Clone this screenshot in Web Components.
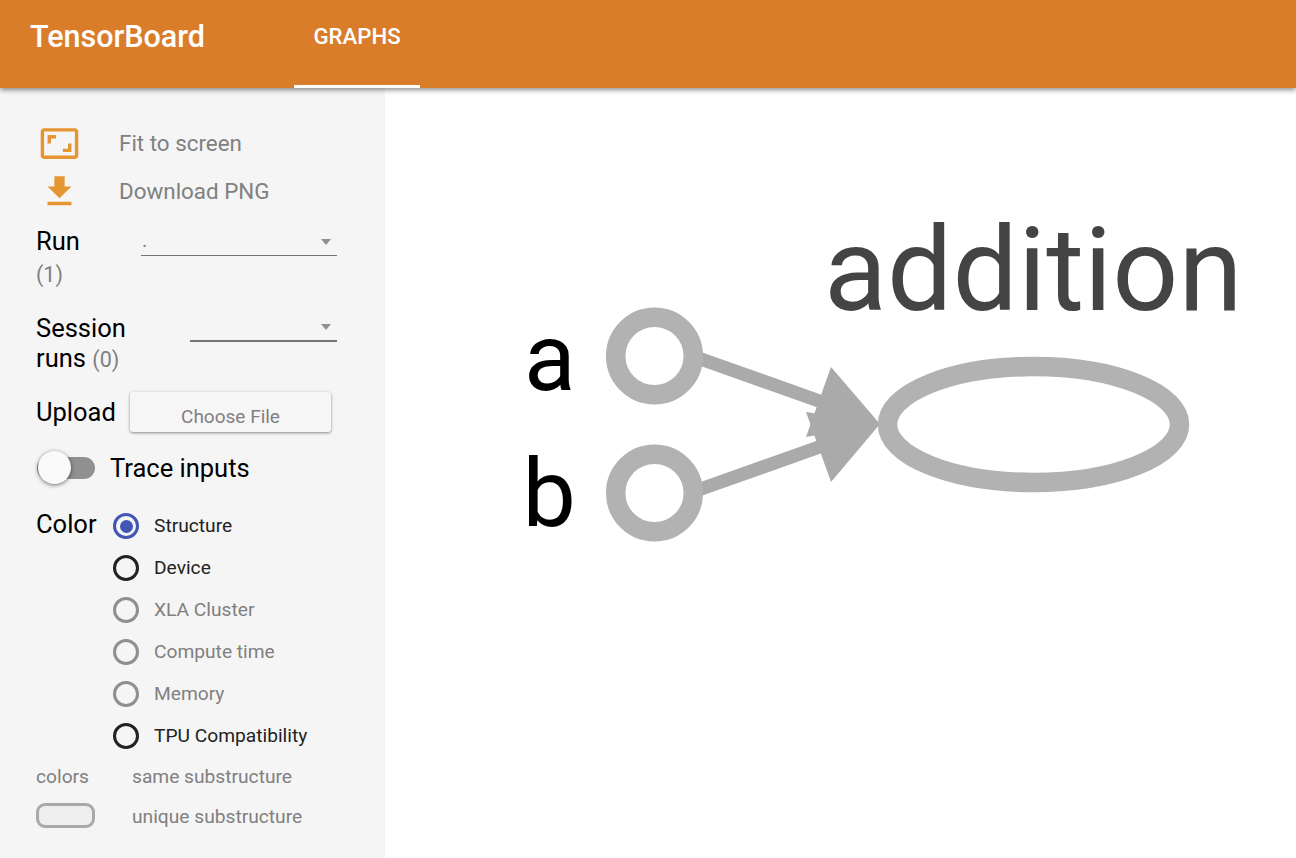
<!DOCTYPE html>
<html>
<head>
<meta charset="utf-8">
<title>TensorBoard</title>
<style>
html, body { margin: 0; height: 100%; overflow: hidden; background: #fff; }
body { font-family: Roboto, sans-serif; }
tb-app { height: 858px; }
</style>
</head>
<body>
<tb-app></tb-app>

<script>
class TbHeader extends HTMLElement {
  constructor() {
    super();
    this.attachShadow({ mode: "open" });
    this.shadowRoot.innerHTML = `
<style>
:host {
  display: flex;
  height: 88px;
  flex: none;
  background: #d97d2b;
  color: #fff;
  box-shadow: 0 2px 5px rgba(0,0,0,.45);
  position: relative;
  z-index: 2;
}
.title { font-size: 30.5px; font-weight: 500; margin: 17px 0 0 30px; width: 264px; line-height: 40px; }
.tab {
  width: 126px;
  box-sizing: border-box;
  height: 88px;
  border-bottom: 3px solid #fff;
  text-align: center;
  font-size: 22.2px;
  font-weight: 500;
  line-height: 24px;
  padding-top: 24px;
}
</style>
<div class="title">TensorBoard</div>
<div class="tab">GRAPHS</div>`;
  }
}

class TbAction extends HTMLElement {
  constructor() {
    super();
    this.attachShadow({ mode: "open" });
    this.shadowRoot.innerHTML = `
<style>
:host { display: flex; align-items: center; height: 48px; color: #808080; font-size: 22.4px; }
svg { width: 41px; height: 41px; fill: #e59632; margin: 0 39px 0 3px; flex: none; }
</style>
<svg viewBox="0 0 24 24"><path d="${this.getAttribute("icon")}"/></svg>
<slot></slot>`;
  }
}

class TbDropdown extends HTMLElement {
  constructor() {
    super();
    this.attachShadow({ mode: "open" });
    this.shadowRoot.innerHTML = `
<style>
:host {
  display: block;
  box-sizing: border-box;
  position: relative;
  height: 31px;
  border-bottom: 1px solid #757575;
  color: #808080;
  font-size: 20px;
  line-height: 30px;
  padding-left: 1px;
}
.caret {
  position: absolute;
  right: 6px;
  bottom: 10px;
  border: 5px solid transparent;
  border-top: 6px solid #909090;
  border-bottom: 0;
}
</style>
<slot></slot><div class="caret"></div>`;
  }
}

class TbToggle extends HTMLElement {
  constructor() {
    super();
    this.attachShadow({ mode: "open" });
    this.shadowRoot.innerHTML = `
<style>
:host { display: flex; align-items: center; height: 32px; font-size: 25.5px; color: #000; }
.track { width: 58px; height: 22px; border-radius: 11px; background: #919191; margin: 0 15px 0 1px; position: relative; flex: none; }
.knob {
  position: absolute;
  left: 1px;
  top: -6px;
  width: 33px;
  height: 33px;
  border-radius: 50%;
  background: #fafafa;
  box-shadow: 0 1px 4px rgba(0,0,0,.55);
}
</style>
<div class="track"><div class="knob"></div></div>
<slot></slot>`;
  }
}

class TbRadio extends HTMLElement {
  constructor() {
    super();
    this.attachShadow({ mode: "open" });
    this.shadowRoot.innerHTML = `
<style>
:host { display: flex; align-items: center; height: 42px; font-size: 19.2px; line-height: 40px; color: var(--radio-color, #808080); }
.ring {
  box-sizing: border-box;
  width: 26px;
  height: 26px;
  border-radius: 50%;
  border: 3px solid var(--ring-color, #8f8f8f);
  margin-right: 15px;
  flex: none;
  display: flex;
  align-items: center;
  justify-content: center;
}
.dot { width: 13px; height: 13px; border-radius: 50%; background: var(--dot-color, transparent); }
</style>
<div class="ring"><div class="dot"></div></div>
<slot></slot>`;
  }
}

class TbSidebar extends HTMLElement {
  constructor() {
    super();
    this.attachShadow({ mode: "open" });
    this.shadowRoot.innerHTML = `
<style>
:host {
  display: block;
  box-sizing: border-box;
  width: 385px;
  flex: none;
  background: #f5f5f5;
  padding: 31px 48px 0 36px;
  color: #000;
  font-size: 25.5px;
}
.muted { color: #808080; font-size: 21.5px; }
.run { display: grid; grid-template-columns: 105px 1fr; height: 82px; margin-top: 10px; line-height: 32px; }
.session { display: grid; grid-template-columns: 154px 1fr; height: 75px; margin-top: 2px; line-height: 30px; }
.session > div { padding-top: 4px; }
.session tb-dropdown { border-bottom-width: 2px; height: 33px; }
.upload { display: flex; align-items: center; height: 40px; margin-top: 8px; }
.upload span { width: 94px; }
.file {
  width: 201px;
  height: 40px;
  box-sizing: border-box;
  border-radius: 3px;
  background: #f6f6f6;
  box-shadow: 0 1px 3px rgba(0,0,0,.45);
  color: #808080;
  font-size: 19px;
  text-align: center;
  line-height: 50px;
}
tb-toggle { margin-top: 20px; }
.color { display: grid; grid-template-columns: 77px 1fr; margin-top: 21px; line-height: 39px; }
.legend { display: grid; grid-template-columns: 96px 1fr; grid-auto-rows: 40px; align-items: center; color: #808080; font-size: 19.2px; margin-top: -1px; }
.swatch { box-sizing: border-box; width: 59px; height: 25px; border: 3px solid #a9a9a9; border-radius: 9px; background: #eee; margin-bottom: 1px; }
.on { --ring-color: #4355b5; --dot-color: #4355b5; --radio-color: #222; }
.dark { --ring-color: #222; --radio-color: #222; }
</style>
<tb-action icon="M19 12h-2v3h-3v2h5v-5zM7 9h3V7H5v5h2V9zm14-6H3c-1.1 0-2 .9-2 2v14c0 1.1.9 2 2 2h18c1.1 0 2-.9 2-2V5c0-1.1-.9-2-2-2zm0 16.01H3V4.99h18v14.02z">Fit to screen</tb-action>
<tb-action icon="M19 9h-4V3H9v6H5l7 7 7-7zM5 18v2h14v-2H5z">Download PNG</tb-action>
<div class="run"><div>Run<br><span class="muted">(1)</span></div><tb-dropdown>.</tb-dropdown></div>
<div class="session"><div>Session<br>runs <span class="muted">(0)</span></div><tb-dropdown></tb-dropdown></div>
<div class="upload"><span>Upload</span><div class="file">Choose File</div></div>
<tb-toggle>Trace inputs</tb-toggle>
<div class="color">
  <div>Color</div>
  <div>
    <tb-radio class="on">Structure</tb-radio>
    <tb-radio class="dark">Device</tb-radio>
    <tb-radio>XLA Cluster</tb-radio>
    <tb-radio>Compute time</tb-radio>
    <tb-radio>Memory</tb-radio>
    <tb-radio class="dark">TPU Compatibility</tb-radio>
  </div>
</div>
<div class="legend">
  <div>colors</div><div>same substructure</div>
  <div class="swatch"></div><div>unique substructure</div>
</div>`;
  }
}

// the graph is a free canvas, coordinates are page coordinates via viewBox
class TbGraph extends HTMLElement {
  constructor() {
    super();
    this.attachShadow({ mode: "open" });
    this.shadowRoot.innerHTML = `
<style>
:host { display: block; flex: 1; min-width: 0; background: #fff; }
svg { display: block; width: 100%; height: 100%; font-family: Roboto, sans-serif; }
.node { fill: #fff; stroke: #b2b2b2; stroke-width: 19.5; }
.edge { stroke: #aaa; stroke-width: 13.5; }
.head { fill: #aaa; }
</style>
<svg viewBox="385 88 911 770">
  <line class="edge" x1="698" y1="358" x2="822" y2="402"/>
  <line class="edge" x1="698" y1="490" x2="822" y2="446"/>
  <polygon class="head" points="831,367 880,424 806,437"/>
  <polygon class="head" points="831,482 880,424 806,412"/>
  <circle class="node" cx="654.5" cy="356" r="38.8"/>
  <circle class="node" cx="654.5" cy="493" r="38.8"/>
  <ellipse class="node" cx="1033.5" cy="424.5" rx="146" ry="58"/>
  <text x="524" y="390" font-size="95" fill="#000">a</text>
  <text x="522.5" y="526" font-size="95" fill="#000">b</text>
  <text x="824" y="310" font-size="116" fill="#444">addition</text>
</svg>`;
  }
}

class TbApp extends HTMLElement {
  constructor() {
    super();
    this.attachShadow({ mode: "open" });
    this.shadowRoot.innerHTML = `
<style>
:host { display: flex; flex-direction: column; }
.body { display: flex; flex: 1; min-height: 0; }
</style>
<tb-header></tb-header>
<div class="body"><tb-sidebar></tb-sidebar><tb-graph></tb-graph></div>`;
  }
}

customElements.define("tb-header", TbHeader);
customElements.define("tb-action", TbAction);
customElements.define("tb-dropdown", TbDropdown);
customElements.define("tb-toggle", TbToggle);
customElements.define("tb-radio", TbRadio);
customElements.define("tb-sidebar", TbSidebar);
customElements.define("tb-graph", TbGraph);
customElements.define("tb-app", TbApp);
</script>
</body>
</html>
